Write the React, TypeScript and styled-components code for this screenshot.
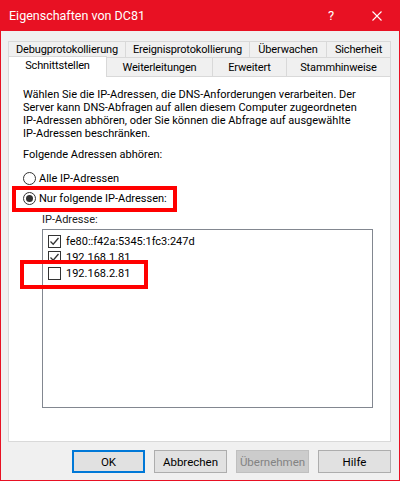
import React from "react";
import styled, { createGlobalStyle } from "styled-components";

const GlobalStyle = createGlobalStyle`
  html, body {
    margin: 0;
    padding: 0;
    background: #f0f0f0;
  }
  body {
    font-family: Roboto, "Liberation Sans", Arial, sans-serif;
    font-size: 11px;
    color: #000;
  }
`;

const Window = styled.div`
  position: relative;
  width: 400px;
  height: 481px;
  box-sizing: border-box;
  border: 1px solid #e81123;
  border-top: none;
  background: #f0f0f0;
  display: flex;
  flex-direction: column;
`;

const TitleBar = styled.div`
  height: 31px;
  margin: 0 -1px;
  background: #e81123;
  color: #fff;
  display: flex;
  align-items: center;
  padding-left: 9px;
  font-size: 12.5px;
`;

const TitleText = styled.div`
  flex: 1;
`;

const TitleButton = styled.div`
  width: 46px;
  height: 31px;
  display: flex;
  align-items: center;
  justify-content: center;
  font-size: 13px;
`;

const Body = styled.div`
  flex: 1;
  display: flex;
  flex-direction: column;
  padding: 10px 8px 0 7px;
`;

const TabRow = styled.div`
  display: flex;
  height: 16px;
`;

const Tab = styled.div<{ $w: number; $active?: boolean }>`
  width: ${(p) => p.$w}px;
  box-sizing: border-box;
  border: 1px solid #d9d9d9;
  border-bottom: none;
  margin-right: -1px;
  background: ${(p) => (p.$active ? "#fff" : "#f0f0f0")};
  display: flex;
  align-items: center;
  justify-content: center;
  white-space: nowrap;
  letter-spacing: -0.15px;
`;

const TabRow2 = styled.div`
  display: flex;
  height: 19px;
  align-items: flex-end;
  position: relative;
  z-index: 1;
`;

const Tab2 = styled(Tab)`
  height: ${(p) => (p.$active ? "21px" : "19px")};
  margin-bottom: ${(p) => (p.$active ? "-1px" : "0")};
  padding-bottom: ${(p) => (p.$active ? "3px" : "0")};
`;

const Panel = styled.div`
  height: 366px;
  box-sizing: border-box;
  background: #fff;
  border: 1px solid #d9d9d9;
  padding: 11px 13px 0 14px;
  white-space: nowrap;
`;

const Intro = styled.p`
  margin: 0;
  line-height: 13px;
`;

const Label = styled.div<{ $indent?: number; $gap: number }>`
  margin-top: ${(p) => p.$gap}px;
  margin-left: ${(p) => p.$indent ?? 0}px;
  line-height: 14px;
  color: ${(p) => (p.$indent ? "#222" : "#000")};
`;

const RadioRow = styled.label`
  display: flex;
  align-items: center;
  gap: 3px;
  height: 20px;
`;

const RadioCircle = styled.span<{ $checked?: boolean }>`
  width: 13px;
  height: 13px;
  box-sizing: border-box;
  border: 1px solid #333;
  border-radius: 50%;
  background: #fff;
  display: flex;
  align-items: center;
  justify-content: center;
  &::after {
    content: "";
    width: 7px;
    height: 7px;
    border-radius: 50%;
    background: ${(p) => (p.$checked ? "#333" : "transparent")};
  }
`;

const Radios = styled.div`
  margin-top: 6px;
`;

const ListBox = styled.div`
  margin: 2px 0 0 19px;
  width: 331px;
  height: 179px;
  box-sizing: border-box;
  border: 1px solid #828790;
  background: #fff;
  padding: 3px 0 0 5px;
`;

const ListItem = styled.div`
  display: flex;
  align-items: center;
  gap: 5px;
  height: 16px;
`;

const Checkbox = styled.span`
  width: 13px;
  height: 13px;
  box-sizing: border-box;
  border: 1px solid #333;
  background: #fff;
  display: flex;
  align-items: center;
  justify-content: center;
`;

const Highlight = styled.div<{ $x: number; $y: number; $w: number; $h: number }>`
  position: absolute;
  left: ${(p) => p.$x}px;
  top: ${(p) => p.$y}px;
  width: ${(p) => p.$w}px;
  height: ${(p) => p.$h}px;
  box-sizing: border-box;
  border: 4px solid #ff0000;
  pointer-events: none;
`;

const ButtonBar = styled.div`
  display: flex;
  justify-content: flex-end;
  gap: 9px;
  padding: 8px 0 0 0;
`;

const Button = styled.button<{ $default?: boolean }>`
  width: 73px;
  height: 23px;
  box-sizing: border-box;
  font-family: Roboto, "Liberation Sans", Arial, sans-serif;
  font-size: 11.5px;
  background: ${(p) => (p.disabled ? "#cccccc" : "#e1e1e1")};
  color: ${(p) => (p.disabled ? "#838383" : "#000")};
  border: ${(p) =>
    p.$default ? "2px solid #0078d7" : p.disabled ? "1px solid #bfbfbf" : "1px solid #adadad"};
  padding: 0;
`;

const Check = () => (
  <svg width="11" height="11" viewBox="0 0 11 11">
    <path d="M1.5 5.5 L4.2 8.2 L9.5 2" fill="none" stroke="#333" strokeWidth="1.3" />
  </svg>
);

const CloseIcon = () => (
  <svg width="10" height="10" viewBox="0 0 10 10">
    <path d="M0.5 0.5 L9.5 9.5 M9.5 0.5 L0.5 9.5" stroke="#fff" strokeWidth="1.1" />
  </svg>
);

const addresses = [
  { ip: "fe80::f42a:5345:1fc3:247d", checked: true },
  { ip: "192.168.1.81", checked: true },
  { ip: "192.168.2.81", checked: false },
];

export default function App() {
  return (
    <>
      <GlobalStyle />
      <Window>
        <TitleBar>
          <TitleText>Eigenschaften von DC81</TitleText>
          <TitleButton>?</TitleButton>
          <TitleButton>
            <CloseIcon />
          </TitleButton>
        </TitleBar>
        <Body>
          <TabRow>
            <Tab $w={118}>Debugprotokollierung</Tab>
            <Tab $w={125}>Ereignisprotokollierung</Tab>
            <Tab $w={78}>Überwachen</Tab>
            <Tab $w={65}>Sicherheit</Tab>
          </TabRow>
          <TabRow2>
            <Tab2 $w={99} $active>
              Schnittstellen
            </Tab2>
            <Tab2 $w={107}>Weiterleitungen</Tab2>
            <Tab2 $w={75}>Erweitert</Tab2>
            <Tab2 $w={105}>Stammhinweise</Tab2>
          </TabRow2>
          <Panel>
            <Intro>
              Wählen Sie die IP-Adressen, die DNS-Anforderungen verarbeiten. Der
              <br />
              Server kann DNS-Abfragen auf allen diesem Computer zugeordneten
              <br />
              IP-Adressen abhören, oder Sie können die Abfrage auf ausgewählte
              <br />
              IP-Adressen beschränken.
            </Intro>
            <Label $gap={8}>Folgende Adressen abhören:</Label>
            <Radios>
              <RadioRow>
                <RadioCircle />
                Alle IP-Adressen
              </RadioRow>
              <RadioRow>
                <RadioCircle $checked />
                Nur folgende IP-Adressen:
              </RadioRow>
            </Radios>
            <Label $gap={5} $indent={19}>
              IP-Adresse:
            </Label>
            <ListBox>
              {addresses.map((a) => (
                <ListItem key={a.ip}>
                  <Checkbox>{a.checked && <Check />}</Checkbox>
                  {a.ip}
                </ListItem>
              ))}
            </ListBox>
          </Panel>
          <ButtonBar>
            <Button $default>OK</Button>
            <Button>Abbrechen</Button>
            <Button disabled>Übernehmen</Button>
            <Button>Hilfe</Button>
          </ButtonBar>
        </Body>
        <Highlight $x={11} $y={186} $w={165} $h={26} />
        <Highlight $x={19} $y={260} $w={128} $h={29} />
      </Window>
    </>
  );
}
